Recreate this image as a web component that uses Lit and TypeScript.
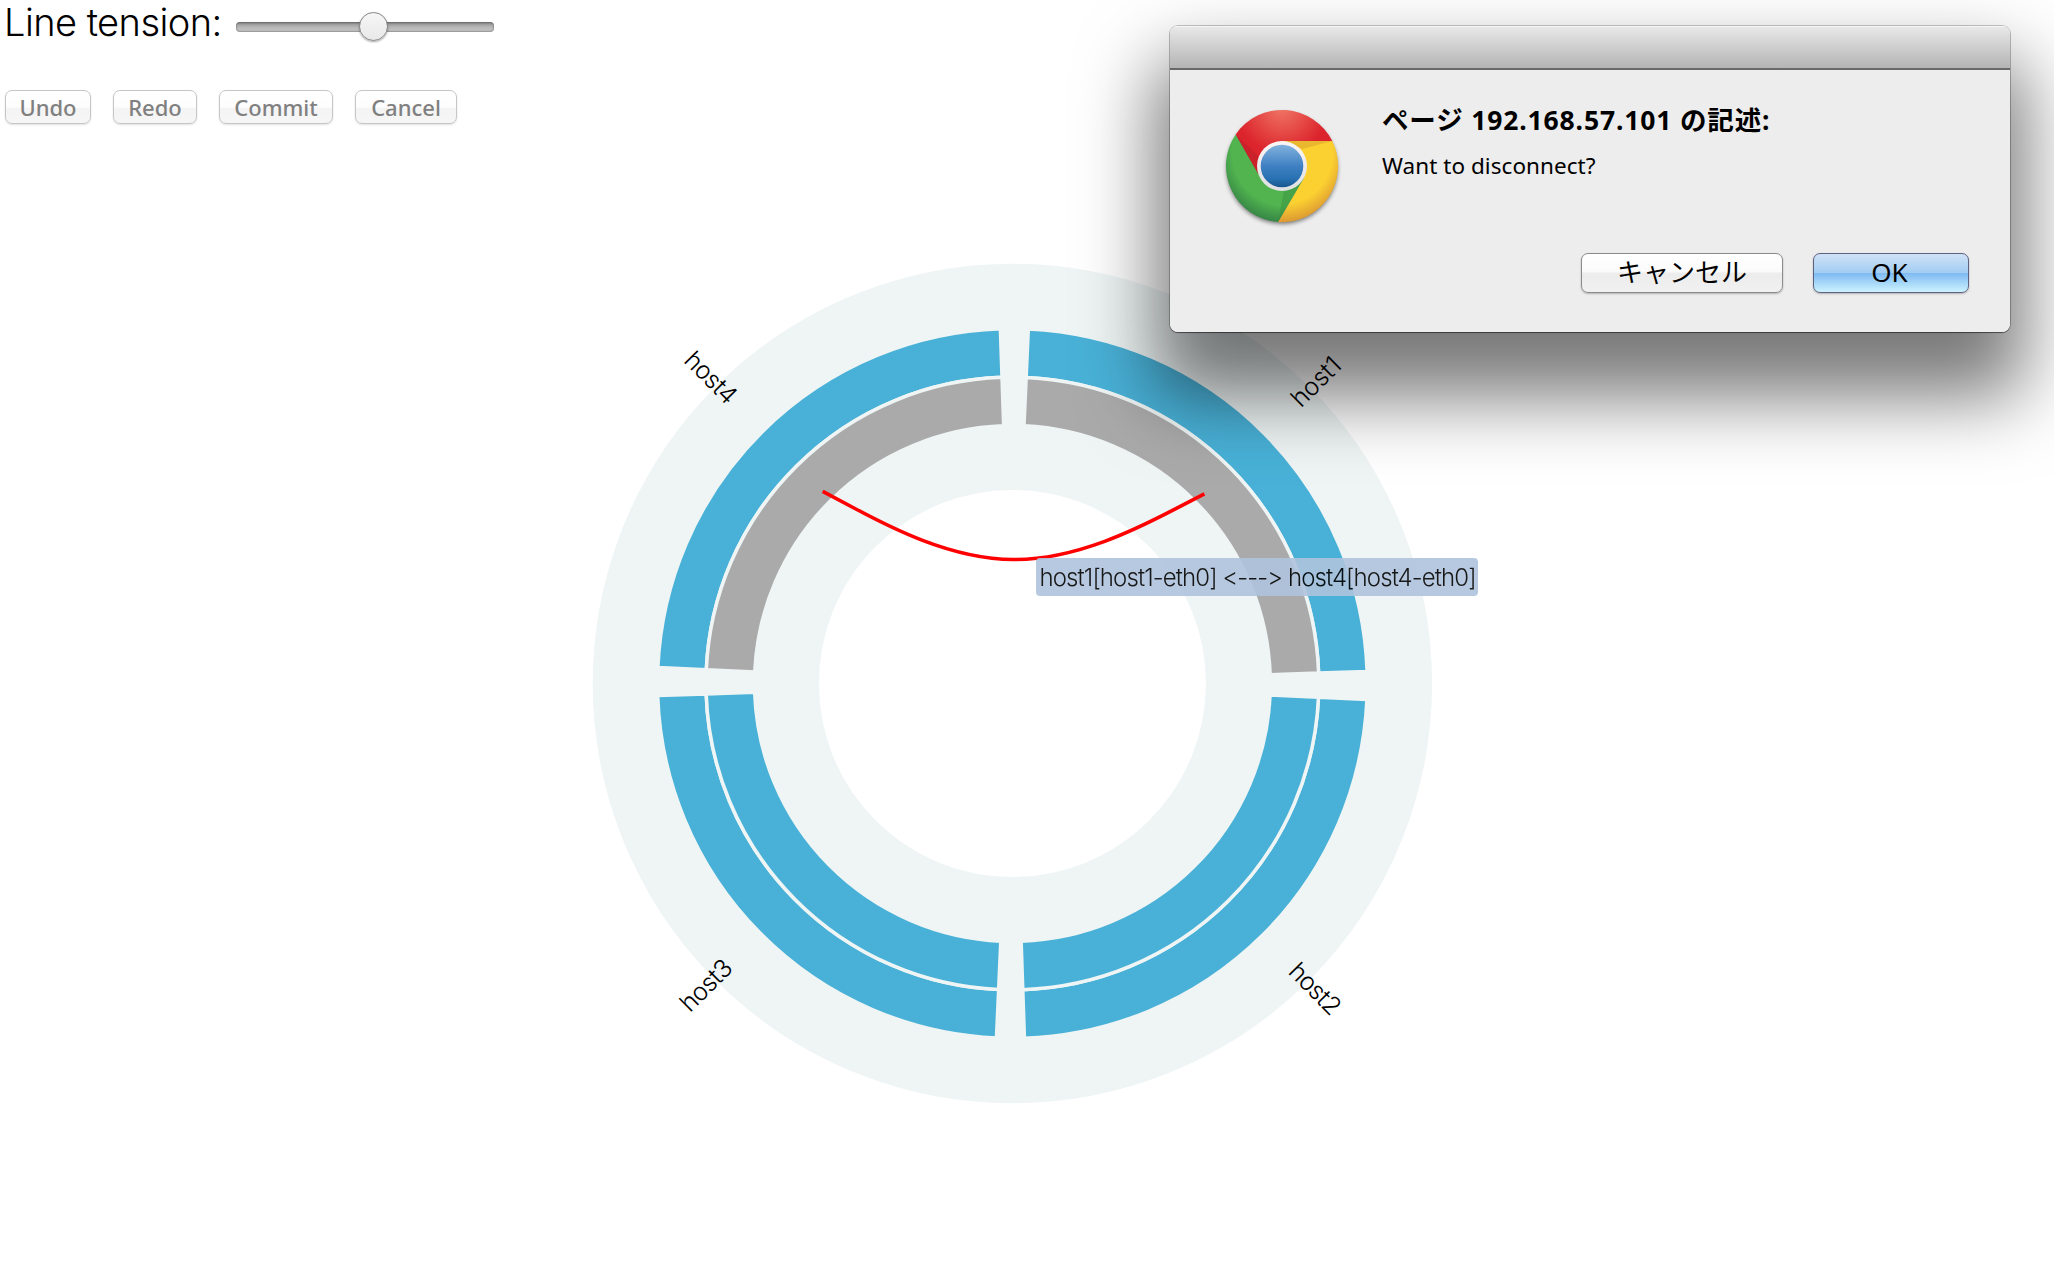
import { LitElement, html, css, svg } from "lit";
import { customElement, property } from "lit/decorators.js";

type Point = [number, number];

const START_PAD = 0.0449;
const END_PAD = 0.0339;

/** Annular sector; angles run clockwise from twelve o'clock. */
function sector(r0: number, r1: number, a0: number, a1: number): string {
  const p = (r: number, a: number) =>
    `${(r * Math.sin(a)).toFixed(2)} ${(-r * Math.cos(a)).toFixed(2)}`;
  return `M${p(r1, a0)}A${r1} ${r1} 0 0 1 ${p(r1, a1)}L${p(r0, a1)}A${r0} ${r0} 0 0 0 ${p(r0, a0)}Z`;
}

/** Cubic basis spline through three control points. */
function bundle(a: Point, b: Point, c: Point): string {
  const mix = (...w: number[]) =>
    [0, 1].map((i) => (a[i] * w[0] + b[i] * w[1] + c[i] * w[2]).toFixed(2)).join(" ");
  const s = 1 / 6;
  return `M${mix(1, 0, 0)}L${mix(5 * s, s, 0)}C${mix(4 * s, 2 * s, 0)} ${mix(2 * s, 4 * s, 0)} ${mix(s, 4 * s, s)}C${mix(0, 4 * s, 2 * s)} ${mix(0, 2 * s, 4 * s)} ${mix(0, s, 5 * s)}L${mix(0, 0, 1)}`;
}

const HOSTS = [
  { name: "host1", linked: true, x: 288.6, y: -274.9, turn: -44.7, len: 59 },
  { name: "host2", linked: false, x: 274.8, y: 289.3, turn: 45.3, len: 62 },
  { name: "host3", linked: false, x: -322.3, y: 329.8, turn: -44.7, len: 62 },
  { name: "host4", linked: true, x: -329.6, y: -321.9, turn: 45.3, len: 62.5 },
];

@customElement("host-ring")
class HostRing extends LitElement {
  static styles = css`
    :host { display: block; }
    .ring { display: block; }
    .disc { fill: none; stroke: #eff5f5; stroke-width: 226.2; }
    .cell { fill: #49b1d7; stroke: #eff5f5; stroke-width: 3.5; }
    .cell.busy { fill: #aaaaaa; }
    .label { font: 260 25px Inter, "Liberation Sans", sans-serif; fill: #000; }
    .link { fill: none; stroke: #ff0000; stroke-width: 3.6; }
  `;
  @property({ type: Number }) tension = 0.526;

  render() {
    const a: Point = [-189.7, -192.2];
    const c: Point = [192, -189.6];
    const k = 1 - this.tension;
    const b: Point = [((a[0] + c[0]) / 2) * k, ((a[1] + c[1]) / 2) * k];
    return html`<svg class="ring" width="904.8" height="887" viewBox="-452.4 -443.5 904.8 887">
      <circle class="disc" r="306.6" />
      ${HOSTS.map((h, i) => {
        const a0 = (i * Math.PI) / 2 + START_PAD;
        const a1 = ((i + 1) * Math.PI) / 2 - END_PAD;
        return svg`
          <path class="cell" d=${sector(306.4, 354.9, a0, a1)} />
          <path class="cell ${h.linked ? "busy" : ""}" d=${sector(257.9, 306.4, a0, a1)} />
          <text class="label" textLength=${h.len} transform="translate(${h.x} ${h.y}) rotate(${h.turn})">${h.name}</text>`;
      })}
      <path class="link" d=${bundle(a, b, c)} />
    </svg>`;
  }
}

@customElement("confirm-dialog")
class ConfirmDialog extends LitElement {
  static styles = css`
    :host { display: block; }
    .window {
      box-sizing: border-box; width: 840px; height: 306px; border-radius: 8px;
      background: #ededed; overflow: hidden; display: flex; flex-direction: column;
      font-family: "Noto Sans", "Noto Sans CJK JP", sans-serif; color: #000;
    }
    .frame {
      border-radius: 8px;
      box-shadow: 0 0 0 1px rgba(0, 0, 0, 0.22), 0 1px 1px rgba(0, 0, 0, 0.4),
        0 50px 74px 15px rgba(0, 0, 0, 0.53);
    }
    .bar {
      flex: none; height: 42px; border-bottom: 2px solid #686868;
      background: linear-gradient(#e9e9e9, #b4b4b4); box-shadow: inset 0 1px #f6f6f6;
    }
    .body { display: flex; padding: 36px 0 0 52px; height: 145px; box-sizing: border-box; }
    .icon { flex: none; display: block; }
    .words { padding: 0 0 0 40px; white-space: nowrap; }
    .title { font-size: 26.5px; font-weight: 700; line-height: 36px; margin-top: -4px; letter-spacing: 0.85px; }
    .message { font-size: 22.5px; line-height: 30px; margin-top: 13px; letter-spacing: 0.05px; }
    .actions { display: flex; justify-content: flex-end; gap: 30px; padding: 38px 41px 0 0; }
    .button {
      box-sizing: border-box; height: 40px; border: 1.5px solid #8b8b8b; border-radius: 7px;
      padding: 0 0 3px; font: 26px/34px "Noto Sans", "Noto Sans CJK JP", sans-serif; color: #000;
      background: linear-gradient(#fff, #fbfbfb 45%, #ececec 52%, #f1f1f1);
      box-shadow: 0 1px 2px rgba(0, 0, 0, 0.25);
    }
    .cancel { width: 202px; }
    .ok {
      width: 156px; border-color: #5e6382; padding-right: 3px;
      background: linear-gradient(#cfe2f6, #a3cdf3 49%, #7fbaf2 51%, #bfeafd 92%, #cdf3fe);
    }
  `;
  render() {
    return html`<div class="frame"><div class="window">
      <div class="bar"></div>
      <div class="body">
        <svg class="icon" width="120" height="124" viewBox="-60 -60 120 124">
          <defs>
            <radialGradient id="red" cx="0" cy="-58" r="46" gradientUnits="userSpaceOnUse">
              <stop offset="0" stop-color="#f07565" /><stop offset="1" stop-color="#dc242c" />
            </radialGradient>
            <radialGradient id="yellow" cx="0" cy="-12" r="70" gradientUnits="userSpaceOnUse">
              <stop offset="0.72" stop-color="#fbd031" /><stop offset="1" stop-color="#d99331" />
            </radialGradient>
            <radialGradient id="green" cx="4" cy="-14" r="72" gradientUnits="userSpaceOnUse">
              <stop offset="0.75" stop-color="#51b44f" /><stop offset="1" stop-color="#348245" />
            </radialGradient>
            <linearGradient id="blue" x2="0" y2="1">
              <stop offset="0" stop-color="#82b2dd" /><stop offset="0.5" stop-color="#4080c3" />
              <stop offset="0.8" stop-color="#2871b2" /><stop offset="1" stop-color="#17568d" />
            </linearGradient>
            <linearGradient id="rim" x2="0" y2="1">
              <stop offset="0" stop-color="#fbf6f5" /><stop offset="1" stop-color="#dfe0e3" />
            </linearGradient>
            <filter id="soft" x="-20%" y="-20%" width="140%" height="140%"><feGaussianBlur stdDeviation="2" /></filter>
          </defs>
          <circle cy="2.5" r="55.5" fill="#000" opacity="0.5" filter="url(#soft)" />
          <path fill="url(#yellow)" d="M0 -25H50.3A56.2 56.2 0 0 1 -4 56L21.6 12.5Z" />
          <path fill="url(#green)" d="M-46.3 -31.6A56.2 56.2 0 0 0 -4 56L21.6 12.5L0 0L-22 10Z" />
          <path fill="url(#red)" d="M-46.3 -31.6A56.2 56.2 0 0 1 50.3 -25H0L-23.5 8Z" />
          <path fill="#b81e28" opacity="0.5" d="M-46.3 -31.6L-22 -8L-24 8Z" />
          <path fill="#d9a02c" opacity="0.5" d="M0 -25H50.3L20 -17Z" />
          <path fill="#378a3f" opacity="0.4" d="M21 13L-4 56L2 25Z" />
          <circle r="25" fill="url(#rim)" />
          <circle r="21.3" fill="url(#blue)" />
        </svg>
        <div class="words">
          <div class="title">ページ 192.168.57.101 の記述:</div>
          <div class="message">Want to disconnect?</div>
        </div>
      </div>
      <div class="actions">
        <button class="button cancel">キャンセル</button>
        <button class="button ok">OK</button>
      </div>
    </div></div>`;
  }
}

@customElement("app-root")
class AppRoot extends LitElement {
  static styles = css`
    :host {
      display: block; position: relative; width: 2054px; height: 1266px; overflow: hidden;
      background: #fff; color: #000; font-family: Inter, "Liberation Sans", sans-serif;
    }
    .tension { display: flex; height: 54px; padding-left: 4px; box-sizing: border-box; }
    .caption { width: 232px; font-size: 38px; font-weight: 300; line-height: 45px; letter-spacing: -0.55px; white-space: nowrap; }
    .slider { width: 258px; padding-top: 22px; }
    .track {
      height: 10px; border-radius: 4px; display: flex; align-items: center; justify-content: center;
      background: linear-gradient(#777, #a6a6a6 30%, #bcbcbc 60%, #c0c0c0);
      box-shadow: inset 0 0 1px 1px rgba(80, 80, 80, 0.35);
    }
    .thumb {
      box-sizing: border-box; width: 29px; height: 29px; border-radius: 50%; margin: 0 0 1px 16px;
      flex: none; border: 1.5px solid #858585; background: linear-gradient(#f6f6f6, #e9e9e9);
      box-shadow: 0 1px 2px rgba(0, 0, 0, 0.35);
    }
    .commands { display: flex; gap: 22px; padding: 36px 0 0 5px; }
    .command {
      box-sizing: border-box; height: 34px; padding: 0 0 1px; border: 1.5px solid #c6c6c6; border-radius: 7px;
      background: linear-gradient(#fff, #fdfdfd 50%, #f4f4f4 55%, #f6f6f6);
      box-shadow: 0 1px 2px rgba(0, 0, 0, 0.12);
      font: 500 22px/30px "Noto Sans", sans-serif; color: #808080;
    }
    .chart { padding: 116px 0 0 560px; }
    .tip {
      position: absolute; left: 1036px; top: 558px; width: 442px; height: 38px; box-sizing: border-box;
      padding-left: 3.5px; border-radius: 4px; background: lightsteelblue; opacity: 0.9;
      font-size: 24px; font-weight: 300; line-height: 39px; letter-spacing: -0.89px; white-space: nowrap;
    }
    .dialog { position: absolute; left: 1170px; top: 26px; }
  `;
  render() {
    const commands = [
      { name: "Undo", width: 86 },
      { name: "Redo", width: 84 },
      { name: "Commit", width: 114 },
      { name: "Cancel", width: 102 },
    ];
    return html`
      <div class="tension">
        <div class="caption">Line tension:</div>
        <div class="slider"><div class="track"><div class="thumb"></div></div></div>
      </div>
      <div class="commands">
        ${commands.map((c) => html`<button class="command" style="width:${c.width}px">${c.name}</button>`)}
      </div>
      <div class="chart"><host-ring></host-ring></div>
      <div class="tip">host1[host1-eth0] &lt;---&gt; host4[host4-eth0]</div>
      <confirm-dialog class="dialog"></confirm-dialog>
    `;
  }
}
